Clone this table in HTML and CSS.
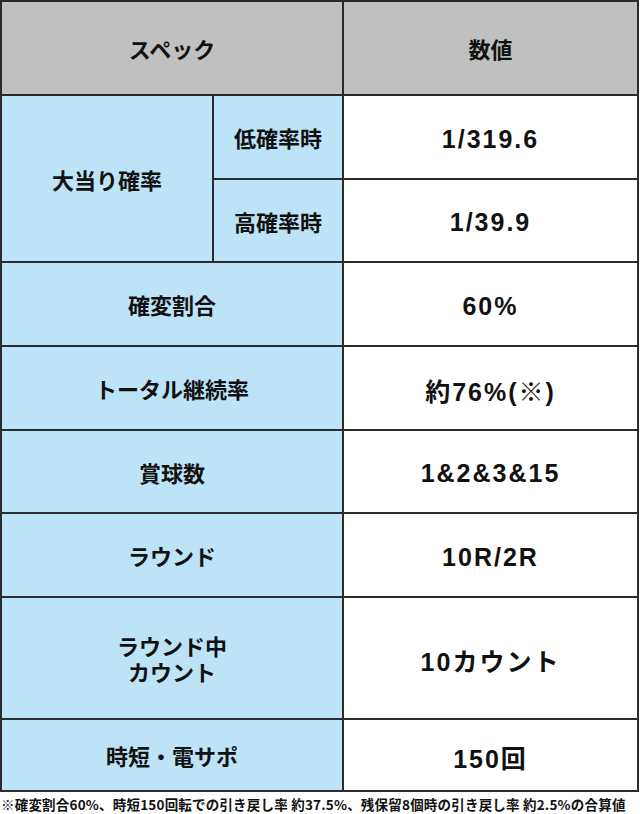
FILE: index.html
```html
<!DOCTYPE html>
<html lang="ja">
<head>
<meta charset="utf-8">
<title>スペック</title>
<link rel="stylesheet" href="styles.css">
</head>
<body>
<div class="spec">
  <div class="cell head span2">スペック</div>
  <div class="cell head">数値</div>

  <div class="cell label rows2">大当り確率</div>
  <div class="cell label">低確率時</div>
  <div class="cell value">1/319.6</div>
  <div class="cell label">高確率時</div>
  <div class="cell value">1/39.9</div>

  <div class="cell label span2">確変割合</div>
  <div class="cell value">60%</div>

  <div class="cell label span2">トータル継続率</div>
  <div class="cell value">約76%(※)</div>

  <div class="cell label span2">賞球数</div>
  <div class="cell value">1&amp;2&amp;3&amp;15</div>

  <div class="cell label span2">ラウンド</div>
  <div class="cell value">10R/2R</div>

  <div class="cell label span2 twoline"><span class="line">ラウンド中</span><span class="line">カウント</span></div>
  <div class="cell value">10カウント</div>

  <div class="cell label span2">時短・電サポ</div>
  <div class="cell value">150回</div>
</div>
<p class="note">※確変割合60%、時短150回転での引き戻し率 約37.5%、残保留8個時の引き戻し率 約2.5%の合算値</p>
</body>
</html>
```
FILE: styles.css
```css
html, body {
  margin: 0;
  padding: 0;
  background: #ffffff;
}

.spec {
  width: 639px;
  box-sizing: border-box;
  display: grid;
  grid-template-columns: 210px 128px 293px;
  grid-template-rows: 92px 82px 81px 82px 82px 81px 82px 120px 70px;
  gap: 2px;
  padding: 2px;
  background: #2b2b2b;
}

.cell {
  display: flex;
  align-items: center;
  justify-content: center;
  text-align: center;
  font-family: "Noto Sans CJK JP", "Liberation Sans", sans-serif;
  font-weight: 700;
  font-size: 22px;
  color: #111111;
}

.head {
  background: #c0c0c0;
}

.label {
  background: #bde3f7;
}

.value {
  background: #ffffff;
  font-family: "Liberation Sans", "Noto Sans CJK JP", sans-serif;
  font-size: 25px;
  letter-spacing: 2px;
  padding-top: 4px;
}

.span2 {
  grid-column: span 2;
}

.rows2 {
  grid-row: span 2;
}

.twoline {
  flex-direction: column;
}

.line {
  display: block;
  line-height: 26px;
  height: 26px;
}

.note {
  margin: 3px 0 0 1px;
  font-family: "Noto Sans CJK JP", sans-serif;
  font-weight: 700;
  font-size: 13.5px;
  letter-spacing: 0.2px;
  line-height: 18px;
  color: #111111;
  white-space: nowrap;
}
```
